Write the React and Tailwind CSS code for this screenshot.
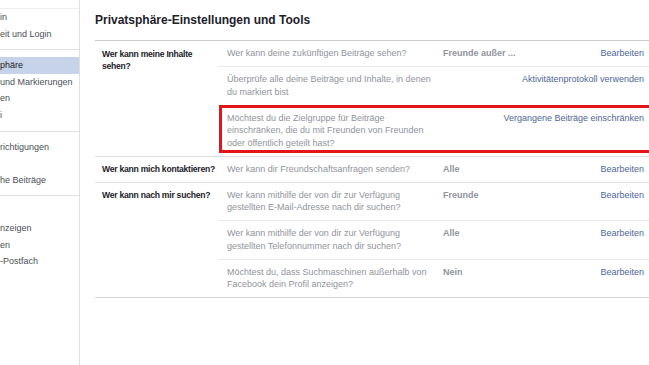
import React from 'react'

const NAV = [
  { t: 'in' },
  { t: 'eit und Login' },
  { div: true },
  { t: 'phäre', active: true },
  { t: 'und Markierungen' },
  { t: 'en' },
  { t: 'i' },
  { div: true },
  { t: 'richtigungen' },
  { t: '' },
  { t: 'he Beiträge' },
  { div: true },
  { t: '' },
  { t: 'nzeigen' },
  { t: 'en' },
  { t: '-Postfach' },
]

function Row({ text, value, action, highlight }) {
  return (
    <div className="relative flex items-start pl-[9px] pr-[5px] pt-[6px] pb-[6.5px] border-b border-[#e9ebee] last:border-b-0">
      {highlight && (
        <div className="absolute left-[1px] -right-[20px] top-[-1px] bottom-[3px] border-[3px] border-[#e3151a] pointer-events-none" />
      )}
      <div className="w-[207px] mr-[9px] leading-[12.5px] text-[#90949c]">{text}</div>
      {value && <div className="w-[110px] font-bold text-[#90949c] leading-[12.5px] whitespace-nowrap">{value}</div>}
      <div className="flex-1 text-right text-[#4f669a] leading-[12.5px] whitespace-nowrap">{action}</div>
    </div>
  )
}

function Section({ label, rows, last }) {
  return (
    <div className={`flex border-b ${last ? 'border-[#d4d6da]' : 'border-[#dddfe2]'}`}>
      <div className="w-[123px] shrink-0 pl-[7px] pt-[6.5px] font-bold text-[#1d2129] leading-[12px] text-[8.6px] whitespace-pre tracking-[-0.25px]">{label}</div>
      <div className="flex-1">
        {rows.map((r, i) => <Row key={i} {...r} />)}
      </div>
    </div>
  )
}

export default function App() {
  return (
    <div className="w-[649px] h-[365px] overflow-hidden bg-white flex text-[9px]" style={{ fontFamily: '"Liberation Sans", Arial, sans-serif' }}>
      {/* Sidebar */}
      <div className="w-[80px] shrink-0 border-r border-[#dddfe2] pt-[8px] text-[#4b4f56]">
        <div className="border-t border-[#eceef1]" />
        {NAV.map((n, i) =>
          n.div ? (
            <div key={i} className="border-t border-[#dddfe2] my-[7px] h-0" />
          ) : (
            <div key={i} className={`h-[16.6px] leading-[16.6px] whitespace-nowrap ${n.active ? 'bg-[#c6d3e9] text-[#1d2129]' : ''}`}>
              {n.t}
            </div>
          )
        )}
      </div>

      {/* Main */}
      <div className="flex-1 pl-[15px] pt-[12px] min-w-0">
        <h1 className="text-[12px] font-bold text-[#1d2129] leading-[16px] mb-[12px]">
          Privatsphäre-Einstellungen und Tools
        </h1>
        <div className="border-t border-[#c9cbcf]" />
        <Section
          label={'Wer kann meine Inhalte\nsehen?'}
          rows={[
            { text: 'Wer kann deine zukünftigen Beiträge sehen?', value: 'Freunde außer ...', action: 'Bearbeiten' },
            { text: 'Überprüfe alle deine Beiträge und Inhalte, in denen du markiert bist', action: 'Aktivitätenprotokoll verwenden' },
            { text: 'Möchtest du die Zielgruppe für Beiträge einschränken, die du mit Freunden von Freunden oder öffentlich geteilt hast?', action: 'Vergangene Beiträge einschränken', highlight: true },
          ]}
        />
        <Section
          label="Wer kann mich kontaktieren?"
          rows={[
            { text: 'Wer kann dir Freundschaftsanfragen senden?', value: 'Alle', action: 'Bearbeiten' },
          ]}
        />
        <Section
          last
          label="Wer kann nach mir suchen?"
          rows={[
            { text: 'Wer kann mithilfe der von dir zur Verfügung gestellten E-Mail-Adresse nach dir suchen?', value: 'Freunde', action: 'Bearbeiten' },
            { text: 'Wer kann mithilfe der von dir zur Verfügung gestellten Telefonnummer nach dir suchen?', value: 'Alle', action: 'Bearbeiten' },
            { text: 'Möchtest du, dass Suchmaschinen außerhalb von Facebook dein Profil anzeigen?', value: 'Nein', action: 'Bearbeiten' },
          ]}
        />
      </div>
    </div>
  )
}
